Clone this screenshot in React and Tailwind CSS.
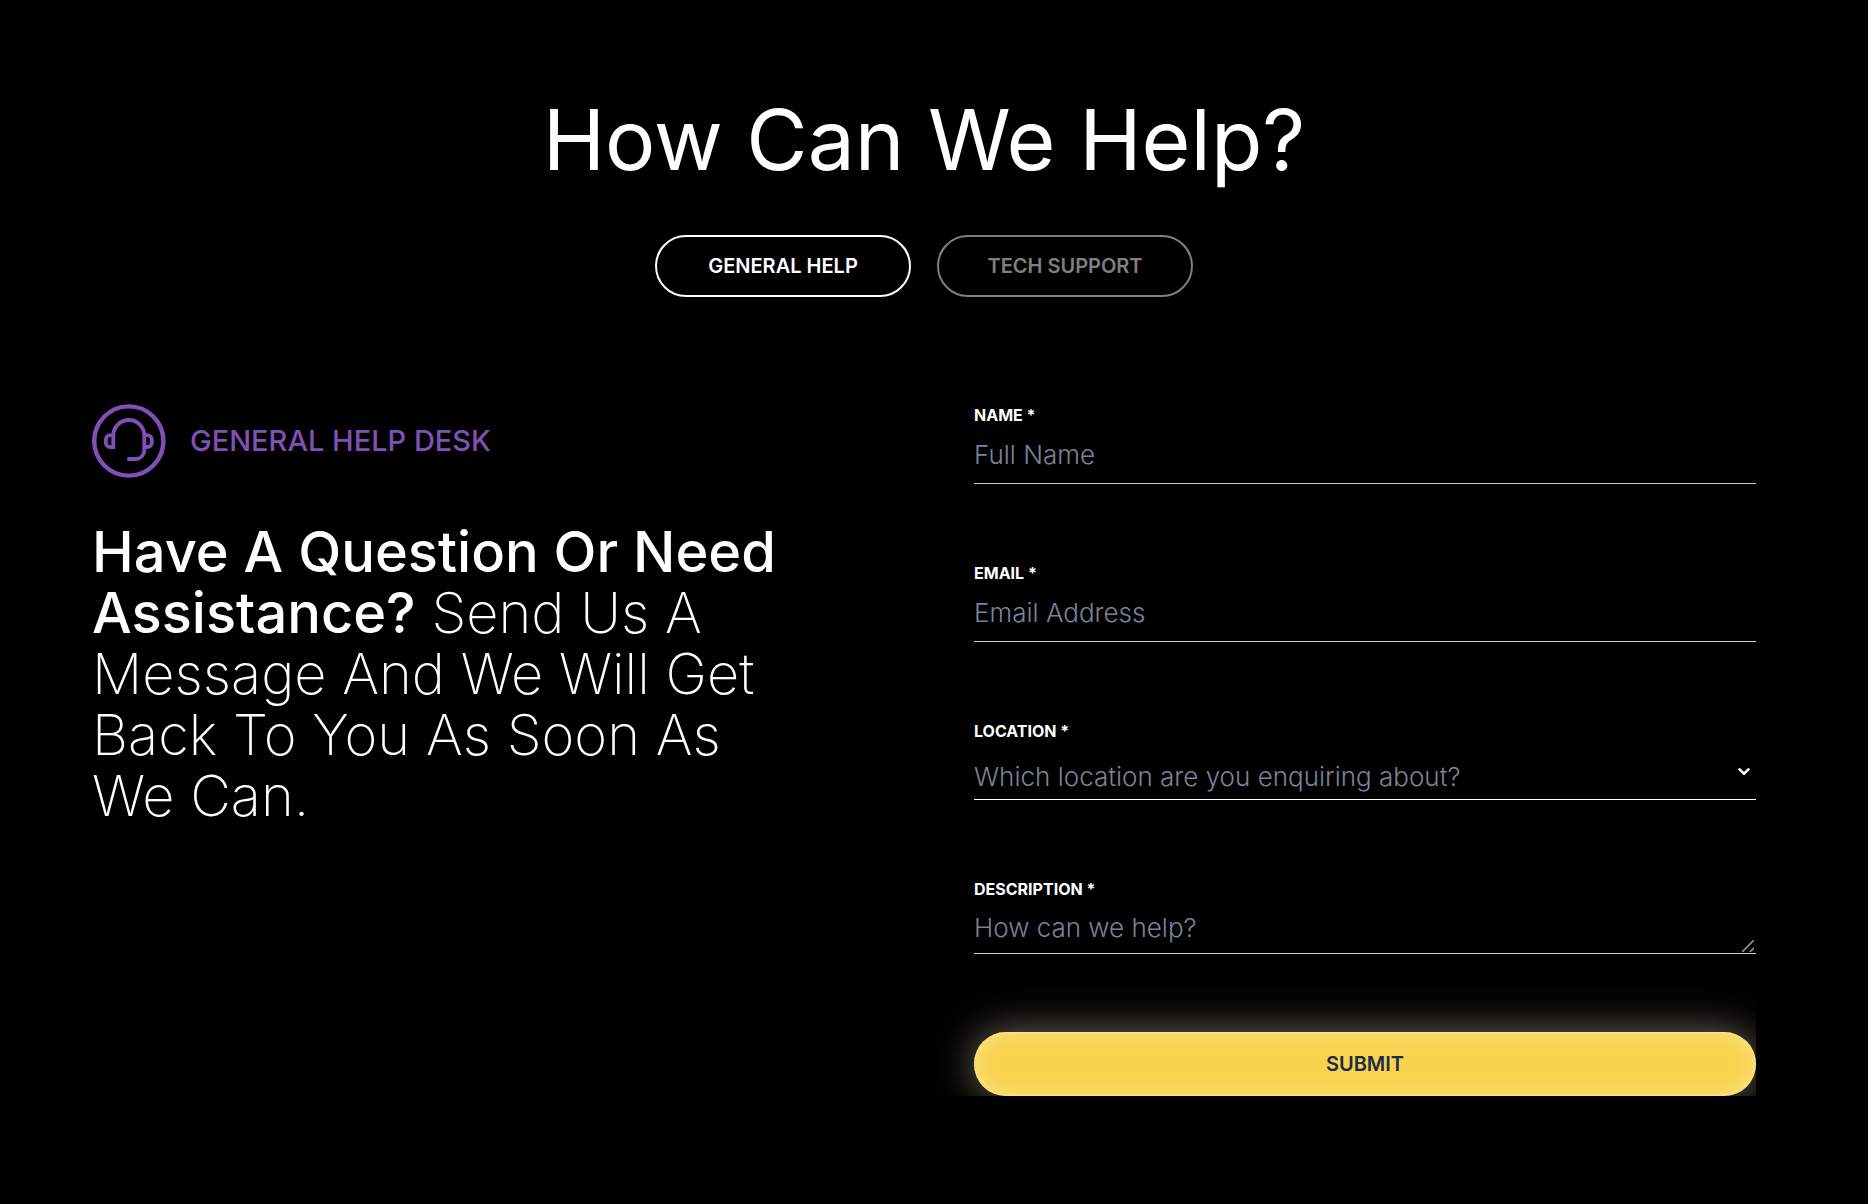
import React, { useState } from 'react';

const HeadsetIcon = () => (
  <svg className="h-[74px] w-[74px] shrink-0" viewBox="0 0 74 74" fill="none" stroke="currentColor" aria-hidden="true">
    <circle cx="36.8" cy="37" r="34.6" strokeWidth="4.4" />
    <path
      strokeWidth="3.8"
      strokeLinecap="round"
      strokeLinejoin="miter"
      d="M21.3 31.5a15.5 15.5 0 0 1 31 0V46.5a8.5 8.5 0 0 1-8.5 8.5H36.8"
    />
    <path
      strokeWidth="3.8"
      strokeLinejoin="miter"
      d="M21.3 31.5V43h-3a4.5 4.5 0 0 1-4.5-4.5v-2.8a4.5 4.5 0 0 1 4.5-4.5h3M52.3 31.2h3a4.5 4.5 0 0 1 4.5 4.5v2.8a4.5 4.5 0 0 1-4.5 4.5h-3"
    />
  </svg>
);

const tabs = ['General Help', 'Tech Support'];

const labelStyle = 'block text-base leading-[22px] font-bold uppercase';
const fieldStyle =
  'block w-full rounded-none border-b border-[#cccccc] bg-transparent text-[26px] font-light text-white outline-none placeholder:text-[#7a8496]';

const App = () => {
  const [activeTab, setActiveTab] = useState(tabs[0]);
  const [location, setLocation] = useState('');

  return (
    <main className="min-h-screen bg-black pt-20 pr-28 pb-24 pl-[92px] font-['Inter',sans-serif] text-white">
      <h1 className="text-center text-[84px] leading-[120px] font-normal">How Can We Help?</h1>

      <div className="mt-[35px] flex justify-center gap-[26px]">
        {tabs.map((tab) => (
          <button
            key={tab}
            type="button"
            onClick={() => setActiveTab(tab)}
            className={`h-[62px] w-64 rounded-full border-2 text-[20px] font-semibold uppercase ${
              tab === activeTab ? 'border-white text-white' : 'border-[#7f7f7f] text-[#7f7f7f]'
            }`}
          >
            {tab}
          </button>
        ))}
      </div>

      <div className="mt-[107px] grid grid-cols-2 gap-[100px]">
        <section>
          <div className="flex items-center gap-6 text-[#8050b8]">
            <HeadsetIcon />
            <h2 className="text-[29px] font-medium uppercase">General Help Desk</h2>
          </div>
          <p className="mt-11 max-w-[700px] text-[56px] leading-[61px] font-extralight">
            <strong className="font-medium">Have A Question Or Need Assistance?</strong> Send Us A Message And We
            Will Get Back To You As Soon As We Can.
          </p>
        </section>

        {/* the form clips the button glow on its right and bottom edges */}
        <form className="-ml-10 overflow-hidden pl-10" onSubmit={(e) => e.preventDefault()}>
          <div className="h-[158px]">
            <label htmlFor="name" className={labelStyle}>Name *</label>
            <input id="name" type="text" placeholder="Full Name" className={`${fieldStyle} h-[58px]`} />
          </div>
          <div className="h-[158px]">
            <label htmlFor="email" className={labelStyle}>Email *</label>
            <input id="email" type="email" placeholder="Email Address" className={`${fieldStyle} h-[58px]`} />
          </div>
          <div className="h-[158px]">
            <label htmlFor="location" className={labelStyle}>Location *</label>
            <div className="relative">
              <select
                id="location"
                value={location}
                onChange={(e) => setLocation(e.target.value)}
                className="block h-[58px] w-full appearance-none rounded-none border-b border-white bg-transparent pt-3 text-[26px] font-light text-[#7a8496] outline-none"
              >
                <option value="">Which location are you enquiring about?</option>
              </select>
              <svg
                className="pointer-events-none absolute top-6 right-1.5 h-3 w-3"
                viewBox="0 0 12 12"
                fill="none"
                stroke="currentColor"
                strokeWidth="2.4"
                aria-hidden="true"
              >
                <path d="M.8 2.5L6 7.7l5.2-5.2" />
              </svg>
            </div>
          </div>
          <div>
            <label htmlFor="description" className={labelStyle}>Description *</label>
            <div className="relative">
              <textarea
                id="description"
                placeholder="How can we help?"
                className={`${fieldStyle} h-[54px] pt-3 leading-8 [&::-webkit-resizer]:bg-transparent`}
              />
              <svg
                className="pointer-events-none absolute right-0.5 bottom-0.5 h-3 w-3 text-[#8a8a8a]"
                viewBox="0 0 12 12"
                fill="none"
                stroke="currentColor"
                strokeWidth="1.8"
                aria-hidden="true"
              >
                <path d="M0 12L12 0M8 12l4-4" />
              </svg>
            </div>
          </div>
          <button
            type="submit"
            className="mt-[78px] h-16 w-full rounded-full bg-[#f8d34c] text-[20px] font-semibold text-[#1b2b4b] uppercase shadow-[0_0_40px_rgba(255,241,200,0.45),inset_0_0_24px_rgba(255,241,190,0.55),inset_0_0_3px_rgba(255,241,190,0.8)]"
          >
            Submit
          </button>
        </form>
      </div>
    </main>
  );
};

export default App;
